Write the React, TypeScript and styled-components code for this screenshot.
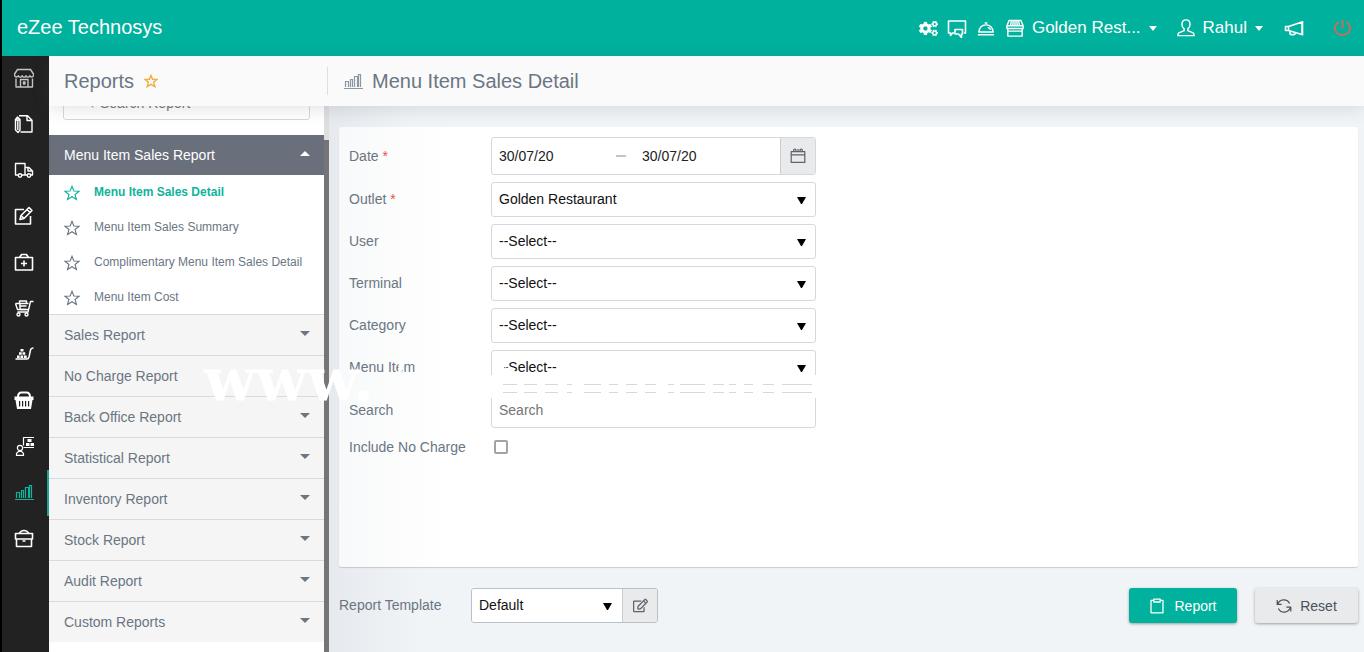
import React from "react";
import styled, { createGlobalStyle } from "styled-components";
import { FaCogs, FaRegEdit } from "react-icons/fa";

const GlobalStyle = createGlobalStyle`
  *, *::before, *::after { box-sizing: border-box; }
  body { margin: 0; background: #000; }
  body, button, input, select {
    font-family: "Liberation Sans", Arial, sans-serif;
    font-size: 14px;
  }
  ul { list-style: none; margin: 0; padding: 0; }
  h1, h2 { margin: 0; font-weight: 400; }
  svg { display: block; flex: none; }
  button { cursor: pointer; }
`;

const Shell = styled.div`
  position: relative;
  display: flex;
  flex-direction: column;
  height: 100vh;
  border-left: 2px solid #000;
  overflow: hidden;
`;

const Header = styled.header`
  display: flex;
  flex: none;
  align-items: center;
  justify-content: space-between;
  height: 56px;
  padding: 0 12px 0 15px;
  background: #00b19d;
  color: #fff;
`;

const Brand = styled.a`
  padding-bottom: 2px;
  color: #fff;
  font-size: 20px;
  text-decoration: none;
`;

const HeaderTools = styled.div`
  display: flex;
  align-items: center;
`;

const HeaderButton = styled.button<{ $gap?: number; $color?: string }>`
  display: flex;
  align-items: center;
  gap: 8px;
  height: 24px;
  margin: 0 0 0 ${(p) => p.$gap ?? 9}px;
  padding: 0;
  border: 0;
  background: none;
  color: ${(p) => p.$color ?? "#fff"};
  font-size: 17px;
`;

const Body = styled.div`
  display: flex;
  flex: 1;
  min-height: 0;
`;

const NavRail = styled.nav`
  flex: none;
  width: 47px;
  background: #222;
`;

const NavLink = styled.a<{ $active?: boolean }>`
  display: flex;
  align-items: center;
  justify-content: center;
  height: 46px;
  padding: 0 2px 2px 0;
  border-right: 2px solid ${(p) => (p.$active ? "#1aa693" : "transparent")};
  color: ${(p) => (p.$active ? "#10b39b" : "#fff")};
`;

const Content = styled.div`
  display: flex;
  flex: 1;
  flex-direction: column;
  min-width: 0;
`;

const TitleBar = styled.div`
  position: relative;
  z-index: 1;
  display: flex;
  flex: none;
  align-items: center;
  height: 50px;
  padding-left: 15px;
  background: #fafafa;
  color: #6b7683;
  box-shadow: 0 2px 18px rgba(60, 70, 80, 0.16);
`;

const SectionTitle = styled.div`
  display: flex;
  align-items: center;
  gap: 10px;
  width: 264px;
  height: 28px;
  border-right: 1px solid #dcdfe2;
`;

const PageTitle = styled.div`
  display: flex;
  align-items: center;
  gap: 9px;
  padding-left: 15px;
`;

const Title = styled.h1`
  font-size: 20px;
`;

const Panels = styled.div`
  display: flex;
  flex: 1;
  min-height: 0;
`;

const ReportPanel = styled.aside`
  flex: none;
  width: 275px;
  overflow: hidden;
  background: #fff;
`;

const ScrollTrack = styled.div`
  flex: none;
  width: 5px;
  padding-top: 34px;
  background: #dedede;
`;

const ScrollThumb = styled.div`
  height: 100%;
  background: #757575;
`;

const ReportSearch = styled.label`
  display: flex;
  align-items: center;
  gap: 6px;
  height: 36px;
  margin: -22px 14px 15px;
  padding: 2px 0 0 20px;
  border: 1px solid #d3d8dc;
  border-radius: 3px;
  color: #6b7683;
`;

const ReportSearchInput = styled.input`
  width: 180px;
  padding: 0;
  border: 0;
  outline: 0;
  color: #333;
  &::placeholder { color: #757575; opacity: 1; }
`;

const GroupButton = styled.button<{ $open?: boolean }>`
  display: flex;
  align-items: center;
  justify-content: space-between;
  width: 100%;
  height: ${(p) => (p.$open ? 40 : 41)}px;
  padding: 0 14px 0 15px;
  border: 0;
  border-top: ${(p) => (p.$open ? "0" : "1px solid #d5dbe0")};
  background: ${(p) => (p.$open ? "#696f7b" : "#f5f5f5")};
  color: ${(p) => (p.$open ? "#fff" : "#6b7683")};
  text-align: left;
`;

const SubList = styled.ul`
  margin-bottom: -1px;
`;

const SubLink = styled.a<{ $active?: boolean }>`
  display: flex;
  align-items: center;
  gap: 14px;
  height: 35px;
  padding-left: 15px;
  color: ${(p) => (p.$active ? "#10b39b" : "#6b7683")};
  font-size: 12px;
  font-weight: ${(p) => (p.$active ? 700 : 400)};
  line-height: 15px;
  text-decoration: none;
`;

const Main = styled.main`
  display: flex;
  flex: 1;
  flex-direction: column;
  min-width: 0;
  padding: 21px 6px 29px 10px;
  background: linear-gradient(90deg, #e6e9ed, #f0f4f7 90px);
`;

const Card = styled.form`
  display: grid;
  flex: 1;
  grid-template-columns: 142px minmax(0, 325px);
  align-content: start;
  align-items: center;
  row-gap: 7px;
  padding: 10px;
  border-radius: 3px;
  background: linear-gradient(90deg, #f8f9fa, #fff 110px);
  box-shadow: 0 1px 1px rgba(0, 0, 0, 0.16);
`;

const Label = styled.label`
  color: #6b7683;
  line-height: 17px;
`;

const Required = styled.span`
  color: #ef4e4e;
`;

const DateRange = styled.div`
  display: flex;
  align-items: center;
  height: 38px;
  border: 1px solid #d3d9dd;
  border-radius: 3px;
  background: #fff;
`;

const DateInput = styled.input<{ $width?: number }>`
  flex: ${(p) => (p.$width ? `0 1 ${p.$width}px` : "1")};
  min-width: 0;
  height: 34px;
  padding: 0 7px;
  border: 0;
  background: none;
  color: #222;
`;

const DateDash = styled.span`
  flex: none;
  width: 10px;
  height: 2px;
  margin: 0 9px 0 8px;
  background: #c4c4c4;
`;

const AddonButton = styled.button`
  display: flex;
  align-items: center;
  justify-content: center;
  align-self: stretch;
  width: 35px;
  padding: 0;
  border: 0;
  border-left: 1px solid #c9ced2;
  border-radius: 0 2px 2px 0;
  background: #e9eaec;
  color: #5b636d;
`;

const SelectWrap = styled.div`
  display: grid;
  flex: 1;
  align-items: center;
  > * { grid-area: 1 / 1; }
  > svg { justify-self: end; margin-right: 10px; pointer-events: none; }
`;

const Select = styled.select`
  appearance: none;
  width: 100%;
  height: 35px;
  padding: 0 7px 2px;
  border: 1px solid #d3d9dd;
  border-radius: 3px;
  background: #fff;
  color: #111;
`;

const TextInput = styled.input`
  width: 100%;
  height: 36px;
  padding: 0 7px;
  border: 1px solid #d3d9dd;
  border-radius: 3px;
  background: #fff;
  color: #111;
  &::placeholder { color: #757575; opacity: 1; }
`;

const CheckCell = styled.div`
  display: flex;
  align-items: center;
  height: 24px;
  padding-left: 3px;
`;

const Checkbox = styled.input`
  appearance: none;
  width: 14px;
  height: 14px;
  margin: 0;
  border: 2px solid #a3a3a3;
  border-radius: 2px;
  background: #fff;
  &:checked { background: #00b19d; }
`;

const Footer = styled.div`
  display: flex;
  align-items: center;
  flex: none;
  padding-top: 21px;
`;

const FooterLabel = styled(Label)`
  width: 132px;
`;

const TemplatePicker = styled.div`
  display: flex;
  width: 187px;
  height: 35px;
  border: 1px solid #b9c1c8;
  border-radius: 3px;
  background: #fff;
  ${Select} { height: 33px; border: 0; }
`;

const Actions = styled.div`
  display: flex;
  gap: 18px;
  margin-left: auto;
`;

const ActionButton = styled.button<{ $primary?: boolean }>`
  display: flex;
  align-items: center;
  justify-content: center;
  gap: ${(p) => (p.$primary ? 9 : 8)}px;
  width: ${(p) => (p.$primary ? 108 : 103)}px;
  height: 35px;
  padding: 0;
  border: 0;
  border-radius: 3px;
  background: ${(p) => (p.$primary ? "#00b19d" : "#e9eaec")};
  color: ${(p) => (p.$primary ? "#fff" : "#48505a")};
  box-shadow: 0 1px 3px rgba(0, 0, 0, 0.35);
`;

const Watermark = styled.div`
  position: absolute;
  z-index: 2;
  top: 348px;
  left: 202px;
  color: #fff;
  font-family: "DejaVu Serif", serif;
  font-size: 60px;
  font-weight: 700;
  line-height: 64px;
  pointer-events: none;
`;

const WornStrokes = styled.svg`
  position: absolute;
  top: 0;
  left: 184px;
`;

const Icon = ({
  size = 20,
  sw = 1.4,
  children,
}: {
  size?: number;
  sw?: number;
  children: React.ReactNode;
}) => (
  <svg
    width={size}
    height={size}
    viewBox="0 0 20 20"
    fill="none"
    stroke="currentColor"
    strokeWidth={sw}
    strokeLinejoin="round"
    aria-hidden="true"
  >
    {children}
  </svg>
);

const Caret = ({ up }: { up?: boolean }) => (
  <svg width="10" height="10" viewBox="0 0 10 10" fill="currentColor" aria-hidden="true">
    <path d={up ? "M0 6 5 1 10 6Z" : "M0 1H10L5 6Z"} />
  </svg>
);

const SmallCaret = () => (
  <svg width="8" height="5" viewBox="0 0 8 5" fill="currentColor" aria-hidden="true">
    <path d="M0 0H8L4 5Z" />
  </svg>
);

const SelectArrow = () => (
  <svg width="9" height="9" viewBox="0 0 9 9" fill="#000" aria-hidden="true">
    <path d="M0 2H9L5 9H4Z" />
  </svg>
);

const Star = ({ size = 16 }: { size?: number }) => (
  <Icon size={size}>
    <path strokeLinejoin="miter" d="M10 1.6 12.3 7.5 18.8 7.8 13.8 11.9 15.5 18.2 10 14.7 4.5 18.2 6.2 11.9 1.2 7.8 7.7 7.5Z" />
  </Icon>
);

const ChartIcon = ({ color }: { color?: string }) => (
  <svg width="20" height="20" viewBox="0 0 20 20" fill="none" stroke={color ?? "currentColor"} aria-hidden="true">
    <path d="M2.500 16v-5.500h3V16M7.500 16V8.500h2V16M11.500 16V5.500h3V16M15.500 16V3.500h2V16" strokeWidth="1.200" />
    <path d="M1 17.500h19" />
  </svg>
);

const navItems: { label: string; icon: React.ReactNode }[] = [
  {
    label: "Store",
    icon: (
      <Icon>
        <g stroke="#c4c4c4" strokeWidth="1.4">
          <path d="M3.500 1.500h13l3 4.500v1.700a2 2 0 0 1-3.700 0 2 2 0 0 1-3.800 0 2 2 0 0 1-3.800 0 2 2 0 0 1-3.900 0 2 2 0 0 1-3.700 0V6Z" />
          <path d="M2 10.500v8.500h16.500v-8.500M6.500 19v-7.500h7.500V19M9.500 14h1.500v2H9.500z" />
        </g>
      </Icon>
    ),
  },
  {
    label: "Orders",
    icon: (
      <Icon>
        <path d="M5 1.800h8.500l4.500 4.500V18H6.500M13 2v4.500h4.500M1.500 5.500 3.500 3l2.500 2.500v10.500L4 18.500l-2.500-2.500ZM1.500 6h4.500M3.800 6v10" />
      </Icon>
    ),
  },
  {
    label: "Delivery",
    icon: (
      <Icon>
        <path d="M4 15H1.500V3.500H11V15H8M11 7.500h4l3.500 3.500v4H17M11 15h2M14 7.500V11h4.500" />
        <circle cx="6" cy="15.500" r="1.700" />
        <circle cx="15" cy="15.500" r="1.700" />
      </Icon>
    ),
  },
  {
    label: "Edit",
    icon: (
      <Icon sw={1.6}>
        <path d="M10 3.500H1.500v14.500h15V10M6 13.500 7 9.500 15 1.500l3 3-8 8ZM13 3.500l3 3M7 9.500l3 3" />
      </Icon>
    ),
  },
  {
    label: "Purchases",
    icon: (
      <Icon sw={1.6}>
        <path d="M1.500 5.500h17v12.500h-17ZM5.500 5.500 7.500 2.500h5l2 3M10 8.500v6M7 11.500h6" />
      </Icon>
    ),
  },
  {
    label: "Cart",
    icon: (
      <Icon>
        <path d="M19.500 3.500h-3L14 14H3.500M1.500 5.500h13M1.500 5.500l2 6H14M5.500 5.500V3h7v2.500M5.500 8h7" />
        <path d="M6 5.500v6h6" />
        <circle cx="4.500" cy="16.500" r="1.500" />
        <circle cx="12.500" cy="16.500" r="1.500" />
      </Icon>
    ),
  },
  {
    label: "Stock",
    icon: (
      <Icon>
        <path strokeWidth="1.500" d="M1.500 15h11.500q1.500 0 2-2l1.500-7q.5-2 3-2" />
        <path fill="currentColor" stroke="none" d="M6.500 5h3v2.500h-3zM5 8.300h2.700v2.500H5zM8.500 8.300h2.700v2.500H8.500zM3 11.600h2.700V14H3zM6.500 11.600h2.700V14H6.500zM10 11.600h2.700V14H10z" />
      </Icon>
    ),
  },
  {
    label: "Basket",
    icon: (
      <Icon>
        <path strokeWidth="2" d="M4 7q0-4.500 3.500-4.500h5Q16 2.500 16 7" />
        <path fill="currentColor" stroke="none" fillRule="evenodd" d="M.500 6.500h19V10h-1l-1.500 9H3L1.500 10h-1ZM5 11v5.500h1.200v-5.500Zm3 0v5.500h1.200v-5.500Zm3 0v5.500h1.200v-5.500Zm3 0v5.500h1.200v-5.500Z" />
      </Icon>
    ),
  },
  {
    label: "Suppliers",
    icon: (
      <Icon sw={1.2}>
        <circle cx="6" cy="12" r="2.600" />
        <path d="M2.500 19.400v-2l2-1.900h3l2 1.900v2ZM9.500 9.500V1.500H20M9.500 11.500H20" />
        <path fill="currentColor" stroke="none" d="M13.500 3h4v3h-4zM12 7h3.500v3h-3.500zM16.500 7H20v3h-3.500z" />
      </Icon>
    ),
  },
  { label: "Reports", icon: <ChartIcon /> },
  {
    label: "Back office",
    icon: (
      <Icon sw={1.6}>
        <path d="M1.500 5.500h17v5.500h-17ZM2.500 11v7.500h15V11M5.500 5.500q1-3 4.500-3t4.500 3M8.500 13h3" />
      </Icon>
    ),
  },
];

const subReports = [
  "Menu Item Sales Detail",
  "Menu Item Sales Summary",
  "Complimentary Menu Item Sales Detail",
  "Menu Item Cost",
];

const groups: { name: string; caret: boolean }[] = [
  { name: "Sales Report", caret: true },
  { name: "No Charge Report", caret: false },
  { name: "Back Office Report", caret: true },
  { name: "Statistical Report", caret: true },
  { name: "Inventory Report", caret: true },
  { name: "Stock Report", caret: true },
  { name: "Audit Report", caret: true },
  { name: "Custom Reports", caret: true },
];

const selects = [
  { id: "outlet", label: "Outlet", value: "Golden Restaurant", required: true },
  { id: "user", label: "User", value: "--Select--" },
  { id: "terminal", label: "Terminal", value: "--Select--" },
  { id: "category", label: "Category", value: "--Select--" },
  { id: "menu-item", label: "Menu Item", value: "--Select--" },
];

// Horizontal extents of the faded watermark strokes: [x, width].
const strokes = [
  [101, 14], [129, 7], [149, 8], [170, 9], [184, 12], [213, 8], [230, 8], [249, 8],
  [268, 12], [286, 6], [317, 8], [336, 5], [348, 8], [365, 10], [386, 8], [424, 6],
];

export default function App() {
  return (
    <Shell>
      <GlobalStyle />
      <Header>
        <Brand href="#">eZee Technosys</Brand>
        <HeaderTools>
          <HeaderButton aria-label="Settings"><FaCogs size={19} /></HeaderButton>
          <HeaderButton aria-label="Messages">
            <Icon sw={1.6}>
              <path d="M7 15H5.500L3.500 17.500V15h-2V3h17v12H17" />
              <path d="M8 11.500h7.500v4.500H14.500v3.500l-3-3.500H8Z" />
            </Icon>
          </HeaderButton>
          <HeaderButton $gap={10} aria-label="Service">
            <Icon size={18} sw={1.6}>
              <path d="M1 17.500h18M2 14.500q1-8 8-8t8 8ZM8.500 4.500h3M12 9.500q2.500.5 3 2.500" />
            </Icon>
          </HeaderButton>
          <HeaderButton $gap={11}>
            <Icon size={18} sw={1.6}>
              <path d="M3.500 1.500h13l2.500 6H1ZM2 10.500h16V19H2ZM2 13.500h16M6 1.500 5 7.500M10 1.500v6M14 1.500l1 6M8 1.500 7.500 7.500M12 1.500l.5 6M1 7.500v3h18v-3" />
            </Icon>
            Golden Rest...
            <SmallCaret />
          </HeaderButton>
          <HeaderButton $gap={20}>
            <Icon size={18} sw={1.6}>
              <path d="M10 1q4.500 0 4.500 5 0 3-2.500 5v2l6 2.500q1 .5 1 3H1q0-2.500 1-3L8 13v-2Q5.500 9 5.500 6q0-5 4.500-5Z" />
            </Icon>
            Rahul
            <SmallCaret />
          </HeaderButton>
          <HeaderButton $gap={21} aria-label="Announcements">
            <Icon sw={1.6}>
              <path d="M1.500 8.500v4h3L18 16.500V4L4.500 8.500ZM4.500 8.500v4M6 13.500v2.500q2.500 1.500 5 0v-1.500M18.500 3v14.500" />
            </Icon>
          </HeaderButton>
          <HeaderButton $gap={29} $color="#c26f62" aria-label="Log out">
            <Icon size={19} sw={2.2}>
              <path d="M10 1v9M6 3a8 7.500 0 1 0 8 0" />
            </Icon>
          </HeaderButton>
        </HeaderTools>
      </Header>

      <Body>
        <NavRail>
          {navItems.map((item) => (
            <NavLink key={item.label} href="#" aria-label={item.label} $active={item.label === "Reports"}>
              {item.icon}
            </NavLink>
          ))}
        </NavRail>

        <Content>
          <TitleBar>
            <SectionTitle>
              <Title as="h2">Reports</Title>
              <svg width="14" height="14" viewBox="0 0 20 20" fill="none" stroke="#f2ac3c" strokeWidth="2" aria-hidden="true">
                <path d="M10 2 12.300 7.500 18.500 7.800 13.800 11.900 15.500 18 10 14.700 4.500 18 6.200 11.900 1.500 7.800 7.700 7.500Z" />
              </svg>
            </SectionTitle>
            <PageTitle>
              <ChartIcon color="#8d96a1" />
              <Title>Menu Item Sales Detail</Title>
            </PageTitle>
          </TitleBar>

          <Panels>
            <ReportPanel>
              <ReportSearch>
                <Icon size={10} sw={2}>
                  <circle cx="8" cy="8" r="6" />
                  <path d="M12 12l6 7" />
                </Icon>
                <ReportSearchInput placeholder="Search Report" aria-label="Search Report" />
              </ReportSearch>
              <GroupButton $open>
                Menu Item Sales Report
                <Caret up />
              </GroupButton>
              <SubList>
                {subReports.map((name, i) => (
                  <li key={name}>
                    <SubLink href="#" $active={i === 0}>
                      <Star />
                      {name}
                    </SubLink>
                  </li>
                ))}
              </SubList>
              {groups.map((g) => (
                <GroupButton key={g.name}>
                  {g.name}
                  {g.caret && <Caret />}
                </GroupButton>
              ))}
            </ReportPanel>
            <ScrollTrack>
              <ScrollThumb />
            </ScrollTrack>

            <Main>
              <Card>
                <Label htmlFor="date-from">Date <Required>*</Required></Label>
                <DateRange>
                  <DateInput id="date-from" $width={116} defaultValue="30/07/20" />
                  <DateDash />
                  <DateInput aria-label="Date to" defaultValue="30/07/20" />
                  <AddonButton type="button" aria-label="Open calendar">
                    <Icon size={16} sw={1.5}>
                      <path d="M1.500 4.500h17V18h-17ZM1.500 8.500h17" />
                      <circle cx="6" cy="3" r="1.500" />
                      <circle cx="14" cy="3" r="1.500" />
                      <path d="M8.500 2.500h3" />
                    </Icon>
                  </AddonButton>
                </DateRange>

                {selects.map((s) => (
                  <React.Fragment key={s.id}>
                    <Label htmlFor={s.id}>
                      {s.label} {s.required && <Required>*</Required>}
                    </Label>
                    <SelectWrap>
                      <Select id={s.id}>
                        <option>{s.value}</option>
                      </Select>
                      <SelectArrow />
                    </SelectWrap>
                  </React.Fragment>
                ))}

                <Label htmlFor="search">Search</Label>
                <TextInput id="search" placeholder="Search" />

                <Label htmlFor="no-charge">Include No Charge</Label>
                <CheckCell>
                  <Checkbox id="no-charge" type="checkbox" />
                </CheckCell>
              </Card>

              <Footer>
                <FooterLabel htmlFor="template">Report Template</FooterLabel>
                <TemplatePicker>
                  <SelectWrap>
                    <Select id="template">
                      <option>Default</option>
                    </Select>
                    <SelectArrow />
                  </SelectWrap>
                  <AddonButton type="button" aria-label="Edit template">
                    <FaRegEdit size={15} />
                  </AddonButton>
                </TemplatePicker>
                <Actions>
                  <ActionButton $primary>
                    <Icon size={16} sw={1.6}>
                      <path d="M6 3H2.500v15.500h15V3H14M6 1.500h8v3.500H6Z" />
                    </Icon>
                    Report
                  </ActionButton>
                  <ActionButton>
                    <Icon size={16} sw={1.5}>
                      <path d="M1.500 2.500V8H7M2 8a8 8 0 0 1 15-1M18.500 17v-5.500H13M18 11.500a8 8 0 0 1-15 1.500" />
                    </Icon>
                    Reset
                  </ActionButton>
                </Actions>
              </Footer>
            </Main>
          </Panels>
        </Content>
      </Body>

      <Watermark aria-hidden="true">
        www.
        <WornStrokes width="430" height="64" viewBox="0 0 430 64" fill="#fff">
          {strokes.map(([x, w]) => (
            <rect key={x} x={x} y="27" width={w} height="23" />
          ))}
          <path d="M11 12h7l-6 15H10ZM109 14h7v9h-7ZM117 19l12 5h12v3h-24Z" />
        </WornStrokes>
      </Watermark>
    </Shell>
  );
}
